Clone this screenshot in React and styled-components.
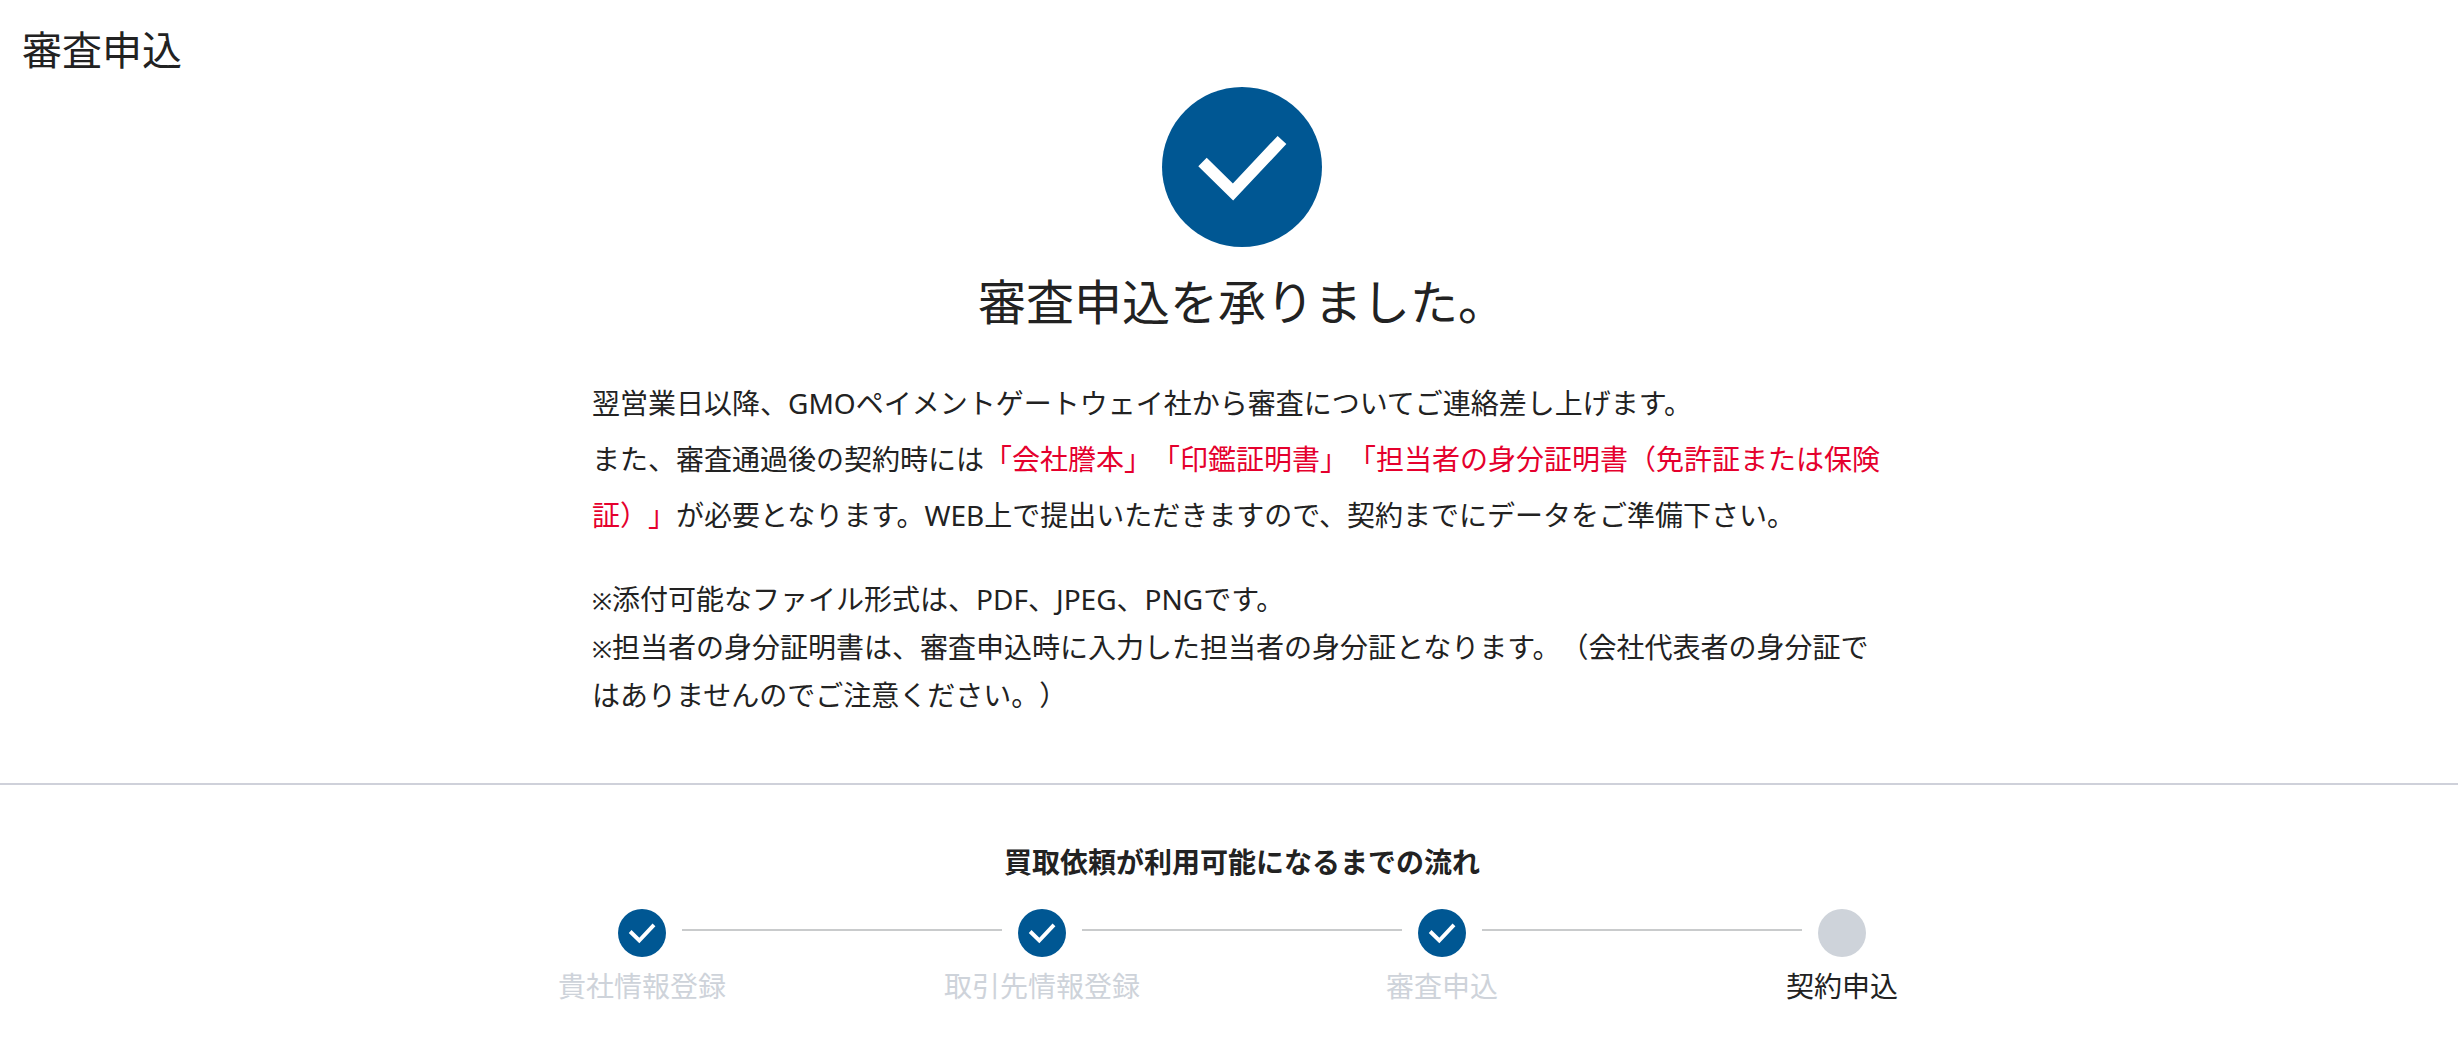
import React from 'react';
import styled, { createGlobalStyle } from 'styled-components';

const GlobalStyle = createGlobalStyle`
  * {
    box-sizing: border-box;
  }

  body {
    margin: 0;
    background-color: #fff;
    color: #222;
    font-family: 'Noto Sans', 'Noto Sans CJK JP', sans-serif;
    font-size: 28px;
    text-spacing-trim: space-all;
  }
`;

const PageTitle = styled.h1`
  margin: 0;
  padding: 20px 22px 7px;
  font-size: 40px;
  font-weight: 400;
  line-height: 60px;
`;

const Complete = styled.section`
  display: flex;
  flex-direction: column;
  align-items: center;
  padding: 0 0 64px 26px;
  border-bottom: 2px solid #cfd1da;
`;

const CompleteTitle = styled.h2`
  margin: 19px 0 37px;
  font-size: 48px;
  font-weight: 400;
  line-height: 72px;
`;

const Message = styled.div`
  width: 100%;
  max-width: 1300px;
`;

const Lead = styled.p`
  margin: 0;
  line-height: 56px;
`;

const Required = styled.span`
  color: #e5002d;
`;

const Notes = styled.ul`
  list-style: none;
  margin: 32px 0 0;
  padding: 0;
  line-height: 48px;
`;

const NoteMark = styled.span`
  font-size: 24px;
  line-height: 1;
`;

const Flow = styled.section`
  padding: 56px 0 48px 26px;
`;

const FlowTitle = styled.h3`
  margin: 0 0 26px;
  font-size: 28px;
  font-weight: 700;
  line-height: 42px;
  text-align: center;
`;

const Steps = styled.ol`
  display: flex;
  list-style: none;
  max-width: 1600px;
  margin: 0 auto;
  padding: 0;
`;

const Step = styled.li`
  flex: 1;
  display: flex;
  flex-direction: column;
  align-items: center;
  gap: 8px;
  color: ${props => props.$done ? '#ced3da' : '#222'};
  line-height: 42px;
`;

const StepTrack = styled.div`
  align-self: stretch;
  display: flex;
  gap: 16px;
`;

const StepLine = styled.span`
  flex: 1;
  height: 2px;
  margin-top: 20px;
  background-color: ${props => props.$hidden ? 'transparent' : '#c9cbcc'};
`;

const StepDot = styled.span`
  width: 48px;
  height: 48px;
  border-radius: 50%;
  background-color: #ced3da;
`;

const steps = [
  { label: '貴社情報登録', done: true },
  { label: '取引先情報登録', done: true },
  { label: '審査申込', done: true },
  { label: '契約申込', done: false },
];

const CheckIcon = ({ size, stroke = 12 }) => (
  <svg width={size} height={size} viewBox="0 0 160 160" aria-hidden="true">
    <circle cx="80" cy="80" r="80" fill="#005793" />
    <path d="M40.500 75 71 105 120 53" fill="none" stroke="#fff" strokeWidth={stroke} />
  </svg>
);

const App = () => {
  return (
    <>
      <GlobalStyle />
      <main>
        <PageTitle>審査申込</PageTitle>

        <Complete>
          <CheckIcon size={160} />
          <CompleteTitle>審査申込を承りました。</CompleteTitle>
          <Message>
            <Lead>
              翌営業日以降、GMOペイメントゲートウェイ社から審査についてご連絡差し上げます。
              <br />
              また、審査通過後の契約時には
              <Required>「会社謄本」「印鑑証明書」「担当者の身分証明書（免許証または保険証）」</Required>
              が必要となります。WEB上で提出いただきますので、契約までにデータをご準備下さい。
            </Lead>
            <Notes>
              <li>
                <NoteMark>※</NoteMark>添付可能なファイル形式は、PDF、JPEG、PNGです。
              </li>
              <li>
                <NoteMark>※</NoteMark>担当者の身分証明書は、審査申込時に入力した担当者の身分証となります。（会社代表者の身分証ではありませんのでご注意ください。）
              </li>
            </Notes>
          </Message>
        </Complete>

        <Flow>
          <FlowTitle>買取依頼が利用可能になるまでの流れ</FlowTitle>
          <Steps>
            {steps.map((step, index) => (
              <Step key={step.label} $done={step.done}>
                <StepTrack>
                  <StepLine $hidden={index === 0} />
                  {step.done ? <CheckIcon size={48} stroke={13} /> : <StepDot />}
                  <StepLine $hidden={index === steps.length - 1} />
                </StepTrack>
                {step.label}
              </Step>
            ))}
          </Steps>
        </Flow>
      </main>
    </>
  );
};

export default App;
